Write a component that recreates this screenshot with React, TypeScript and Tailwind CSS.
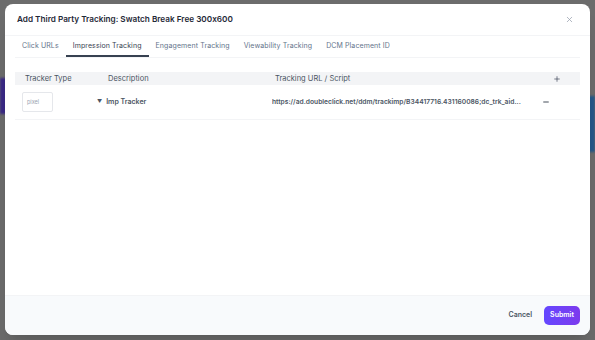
import { X, Plus, Minus } from "lucide-react";

const tabs = ["Click URLs", "Impression Tracking", "Engagement Tracking", "Viewability Tracking", "DCM Placement ID"];

export default function App() {
  return (
    <div
      className="relative h-[340px] w-[595px] overflow-hidden bg-[#6c6c6c] px-[5px] pb-[5px] pt-[4px]"
      style={{ fontFamily: "Inter, 'Noto Sans', sans-serif", fontFeatureSettings: "'calt' 0" }}
    >
      {/* page behind the overlay */}
      <div className="absolute left-0 top-[78px] h-[36px] w-[8px] bg-[#3a2a86] blur-[1px]" />
      <div className="absolute right-0 top-[96px] h-[56px] w-[8px] bg-[#24588a] blur-[1px]" />

      <div className="relative flex h-full flex-col overflow-hidden rounded-[8px] bg-white shadow-xl">
        {/* header */}
        <div className="flex h-[32px] items-center justify-between border-b border-gray-100 pl-[12px] pr-[16px]">
          <h2 className="text-[8.2px] font-semibold text-[#1f2937]">Add Third Party Tracking: Swatch Break Free 300x600</h2>
          <X className="h-[9px] w-[9px] text-gray-400" strokeWidth={2} />
        </div>

        <div className="flex flex-1 flex-col px-[10px]">
          {/* tabs */}
          <div className="flex border-b border-gray-100">
            {tabs.map((t) => (
              <div
                key={t}
                className={
                  t === "Impression Tracking"
                    ? "flex h-[21px] items-center border-b-2 border-[#374151] px-[7px] pt-[2px] text-[7px] tracking-[0.1px] text-[#374151]"
                    : "flex h-[21px] items-center border-b-2 border-transparent px-[7px] pt-[2px] text-[7px] tracking-[0.1px] text-[#64748b]"
                }
              >
                {t}
              </div>
            ))}
          </div>

          {/* table */}
          <div className="mt-[14px]">
            <div className="grid h-[13px] grid-cols-[83px_167px_1fr_30px] items-center bg-[#f3f4f6] pl-[10px] text-[7.5px] text-[#4b5563]">
              <span>Tracker Type</span>
              <span>Description</span>
              <span>Tracking URL / Script</span>
              <Plus className="ml-[3px] h-[8px] w-[8px] text-[#374151]" strokeWidth={2} />
            </div>
            <div className="grid h-[35px] grid-cols-[75px_175px_1fr_36px] items-center border-b border-gray-100 pl-[7px] text-[7px] font-semibold text-[#4b5563]">
              <div className="flex h-[20px] w-[31px] items-center rounded-[2px] border border-gray-200 pl-[4px] text-[5.5px] font-normal text-gray-400">pixel</div>
              <div className="flex items-center gap-[4px]">
                <span className="text-[5px] text-[#4b5563]">▼</span>
                <span>Imp Tracker</span>
              </div>
              <span className="truncate pr-[12px] text-[6.7px]">https://ad.doubleclick.net/ddm/trackimp/B34417716.431160086;dc_trk_aid...</span>
              <Minus className="-ml-[2px] h-[8px] w-[8px] text-[#1f2937]" strokeWidth={2.5} />
            </div>
          </div>
        </div>

        {/* footer */}
        <div className="flex h-[40px] items-center justify-end gap-[12px] border-t border-gray-100 bg-[#f8fafc] pr-[10px]">
          <button className="text-[7px] font-semibold text-[#4b5563]">Cancel</button>
          <button className="h-[19px] w-[36px] rounded-[5px] bg-gradient-to-r from-[#6447ff] to-[#7c3aed] text-[7px] font-semibold text-white">Submit</button>
        </div>
      </div>
    </div>
  );
}
